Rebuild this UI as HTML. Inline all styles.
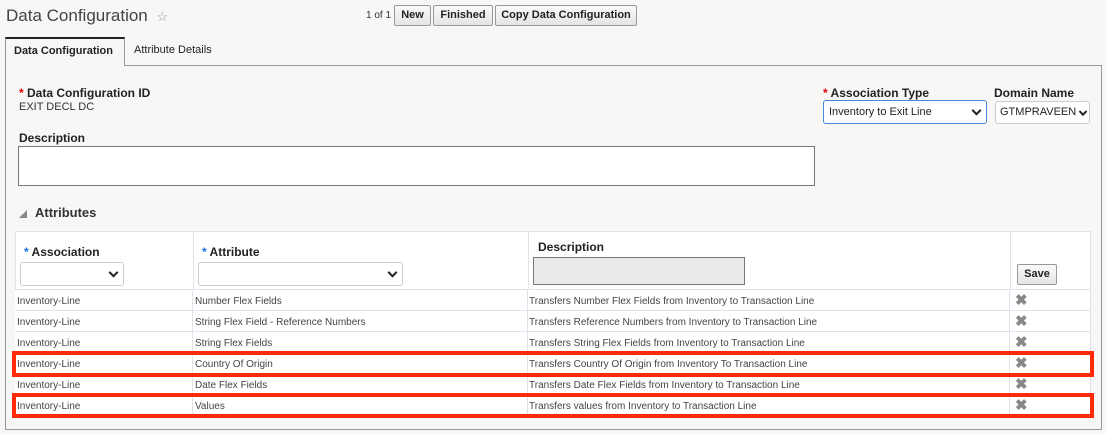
<!DOCTYPE html>
<html><head><style>
*{box-sizing:border-box;margin:0;padding:0}
body{width:1106px;height:434px;background:#f8f7f6;font-family:"Liberation Sans",sans-serif;color:#333;position:relative;overflow:hidden}
.a{position:absolute}
.btn{position:absolute;top:5px;height:21px;border:1px solid #999;background:linear-gradient(#fafafa,#e4e4e4);border-radius:2px;font-size:11px;font-weight:bold;color:#222;text-align:center;line-height:19px}
.lbl{font-size:12px;font-weight:bold;color:#222}
.req{color:#d00}
.sel{position:absolute;background:#fff;border:1px solid #ccc;border-radius:3px;font-size:11px;color:#222;padding-left:5px}
.chev{position:absolute;right:6px;top:50%;width:7px;height:7px;border-right:2px solid #222;border-bottom:2px solid #222;transform:translateY(-70%) rotate(45deg)}
.row{position:absolute;left:15px;width:1076px;height:21px;border-bottom:1px solid #dde3ea;background:#fff;font-size:10px;color:#444}
.row span{position:absolute;top:6px}
.vl{position:absolute;top:0;bottom:0;width:1px;background:#dde3ea}
.x{position:absolute;left:1000px;top:3px;font-size:15px;color:#888;font-weight:bold;line-height:15px}
.red{position:absolute;left:12px;width:1082px;border:4px solid #ff2a0a}
</style></head><body>
<div class="a" style="left:6px;top:6px;font-size:17px;color:#444">Data Configuration <span style="font-size:13px;color:#999;margin-left:4px">☆</span></div>
<div class="a" style="left:366px;top:10px;font-size:10px;color:#333">1 of 1</div>
<div class="btn" style="left:394px;width:37px">New</div>
<div class="btn" style="left:433px;width:60px">Finished</div>
<div class="btn" style="left:495px;width:142px">Copy Data Configuration</div>

<div class="a" style="left:5px;top:65px;width:1097px;height:365px;border:1px solid #999;background:#f8f7f6"></div>
<div class="a" style="left:5px;top:37px;width:120px;height:29px;border:1px solid #999;border-top:2px solid #222;border-bottom:none;background:#f8f7f6;font-size:11px;font-weight:bold;color:#222;padding:6px 0 0 8px">Data Configuration</div>
<div class="a" style="left:134px;top:44px;font-size:11px;color:#222">Attribute Details</div>

<div class="a lbl" style="left:19px;top:86px"><span class="req">*</span> Data Configuration ID</div>
<div class="a" style="left:19px;top:101px;font-size:11px;color:#333">EXIT DECL DC</div>

<div class="a lbl" style="left:823px;top:86px"><span class="req">*</span> Association Type</div>
<div class="sel" style="left:823px;top:100px;width:164px;height:24px;border:1px solid #4a86d6;line-height:22px">Inventory to Exit Line<i class="chev"></i></div>
<div class="a lbl" style="left:994px;top:86px">Domain Name</div>
<div class="sel" style="left:995px;top:101px;width:95px;height:23px;line-height:21px;padding-left:4px;overflow:hidden">GTMPRAVEEN<i class="chev" style="right:3px;width:6px;height:6px"></i></div>

<div class="a lbl" style="left:19px;top:131px">Description</div>
<div class="a" style="left:18px;top:146px;width:797px;height:40px;border:1px solid #777;background:#fff"></div>

<div class="a" style="left:19px;top:210px;width:0;height:0;border-left:8px solid transparent;border-bottom:8px solid #888"></div>
<div class="a" style="left:35px;top:205px;font-size:13px;font-weight:bold;color:#333">Attributes</div>

<div class="a" style="left:15px;top:231px;width:1076px;height:59px;background:#fff;border:1px solid #dde3ea">
 <div class="vl" style="left:177px"></div><div class="vl" style="left:512px"></div><div class="vl" style="left:994px"></div>
 <div class="a lbl" style="left:8px;top:13px"><span style="color:#1a6de0">*</span> Association</div>
 <div class="sel" style="left:4px;top:30px;width:104px;height:24px"><i class="chev"></i></div>
 <div class="a lbl" style="left:186px;top:13px"><span style="color:#1a6de0">*</span> Attribute</div>
 <div class="sel" style="left:182px;top:30px;width:205px;height:24px"><i class="chev"></i></div>
 <div class="a lbl" style="left:522px;top:8px">Description</div>
 <div class="a" style="left:517px;top:25px;width:212px;height:28px;border:1px solid #777;background:#e9eaea"></div>
 <div class="a" style="left:1001px;top:32px;width:40px;height:21px;border:1px solid #999;border-radius:2px;background:linear-gradient(#fafafa,#e4e4e4);font-size:11px;font-weight:bold;color:#222;text-align:center;line-height:19px">Save</div>
</div>

<div class="row" style="top:290px"><div class="vl" style="left:177px"></div><div class="vl" style="left:512px"></div><div class="vl" style="left:994px"></div><div class="vl" style="left:1075px"></div><span style="left:2px">Inventory-Line</span><span style="left:180px">Number Flex Fields</span><span style="left:514px">Transfers Number Flex Fields from Inventory to Transaction Line</span><b class="x">✖</b></div>
<div class="row" style="top:311px"><div class="vl" style="left:177px"></div><div class="vl" style="left:512px"></div><div class="vl" style="left:994px"></div><div class="vl" style="left:1075px"></div><span style="left:2px">Inventory-Line</span><span style="left:180px">String Flex Field - Reference Numbers</span><span style="left:514px">Transfers Reference Numbers from Inventory to Transaction Line</span><b class="x">✖</b></div>
<div class="row" style="top:332px"><div class="vl" style="left:177px"></div><div class="vl" style="left:512px"></div><div class="vl" style="left:994px"></div><div class="vl" style="left:1075px"></div><span style="left:2px">Inventory-Line</span><span style="left:180px">String Flex Fields</span><span style="left:514px">Transfers String Flex Fields from Inventory to Transaction Line</span><b class="x">✖</b></div>
<div class="row" style="top:353px"><div class="vl" style="left:177px"></div><div class="vl" style="left:512px"></div><div class="vl" style="left:994px"></div><div class="vl" style="left:1075px"></div><span style="left:2px">Inventory-Line</span><span style="left:180px">Country Of Origin</span><span style="left:514px">Transfers Country Of Origin from Inventory To Transaction Line</span><b class="x">✖</b></div>
<div class="row" style="top:374px"><div class="vl" style="left:177px"></div><div class="vl" style="left:512px"></div><div class="vl" style="left:994px"></div><div class="vl" style="left:1075px"></div><span style="left:2px">Inventory-Line</span><span style="left:180px">Date Flex Fields</span><span style="left:514px">Transfers Date Flex Fields from Inventory to Transaction Line</span><b class="x">✖</b></div>
<div class="row" style="top:395px"><div class="vl" style="left:177px"></div><div class="vl" style="left:512px"></div><div class="vl" style="left:994px"></div><div class="vl" style="left:1075px"></div><span style="left:2px">Inventory-Line</span><span style="left:180px">Values</span><span style="left:514px">Transfers values from Inventory to Transaction Line</span><b class="x">✖</b></div>

<div class="red" style="top:351px;height:26px"></div>
<div class="red" style="top:393px;height:25px"></div>
</body></html>
